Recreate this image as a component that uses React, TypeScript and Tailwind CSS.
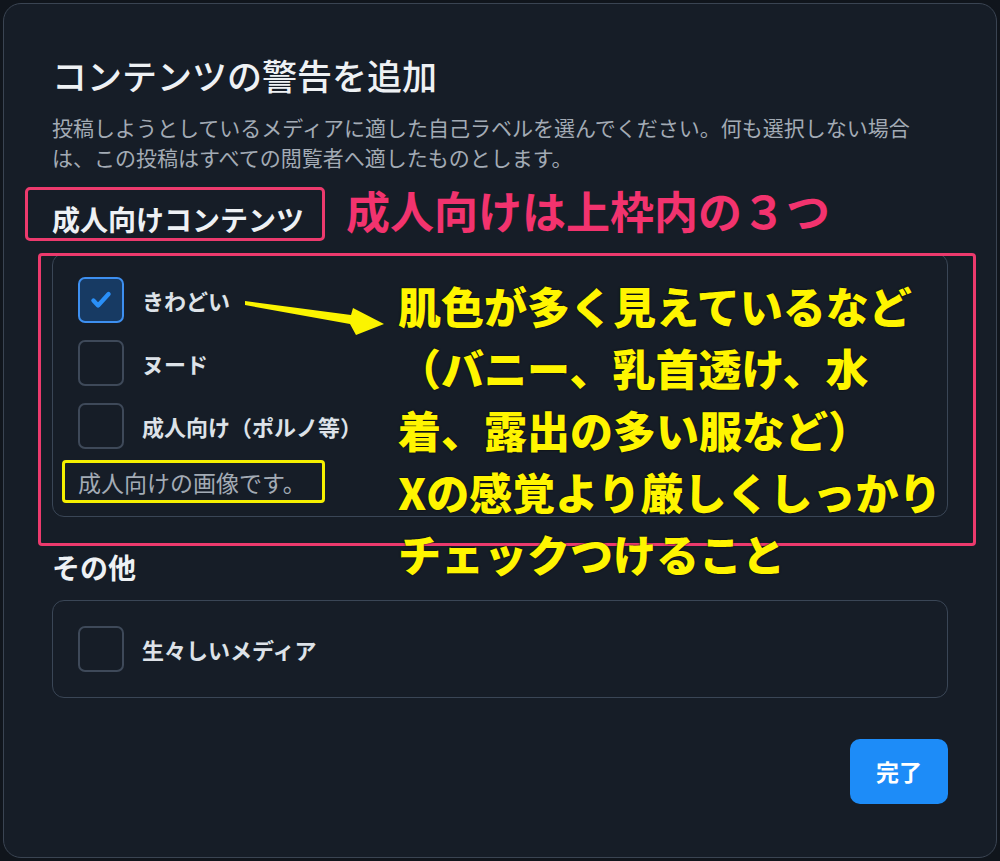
import React from "react";

const font = { fontFamily: '"Noto Sans CJK JP", "Noto Sans", sans-serif' };

function Box({ checked, label }: { checked?: boolean; label: string }) {
  return (
    <div className="flex items-center gap-[18px]">
      {checked ? (
        <div className="flex h-[46px] w-[46px] items-center justify-center rounded-[7px] border-2 border-[#3d8ff0] bg-[#173a63]">
          <svg width="26" height="26" viewBox="0 0 24 24" fill="none">
            <path d="M5 12.5l4.3 4.5L19 6.5" stroke="#2a8ff7" strokeWidth="4" strokeLinecap="round" strokeLinejoin="round" />
          </svg>
        </div>
      ) : (
        <div className="h-[46px] w-[46px] rounded-[7px] border-2 border-[#3e4959]" />
      )}
      <span className="text-[22px] font-semibold leading-[30px] text-[#dde2e8]">{label}</span>
    </div>
  );
}

export default function App() {
  return (
    <div className="relative h-[861px] w-[1000px] overflow-hidden bg-[#10151c]" style={font}>
      <div className="m-[3px] flex h-[855px] flex-col rounded-[18px] border border-[#3a4452] bg-[#161d27] px-[48px] pt-[51px]">
        <h1 className="text-[35px] font-medium leading-[40px] text-[#eef1f4]">コンテンツの警告を追加</h1>
        <p className="mt-[17px] text-[21px] leading-[30px] text-[#a3abb5]">
          投稿しようとしているメディアに適した自己ラベルを選んでください。何も選択しない場合は、この投稿はすべての閲覧者へ適したものとします。
        </p>
        <h2 className="mt-[29px] text-[28px] font-bold leading-[36px] text-[#eef1f4]">成人向けコンテンツ</h2>
        <div className="mt-[16px] flex flex-col rounded-[12px] border border-[#3a4656] px-[25px] pt-[23px] pb-[19px]">
          <div className="flex flex-col gap-[17px]">
            <Box checked label="きわどい" />
            <Box label="ヌード" />
            <Box label="成人向け（ポルノ等）" />
          </div>
          <p className="mt-[18px] text-[23px] leading-[30px] text-[#a3abb5]">成人向けの画像です。</p>
        </div>
        <h2 className="mt-[32px] text-[28px] font-bold leading-[36px] text-[#eef1f4]">その他</h2>
        <div className="mt-[15px] rounded-[12px] border border-[#3a4656] px-[25px] py-[25px]">
          <Box label="生々しいメディア" />
        </div>
        <div className="mt-[41px] flex justify-end">
          <button className="h-[65px] w-[98px] rounded-[10px] bg-[#1d8cf8] text-[23px] font-bold text-white">完了</button>
        </div>
      </div>

      {/* annotations */}
      <div className="absolute left-[25px] top-[187px] h-[54px] w-[300px] rounded-[5px] border-[3px] border-[#ec3a6d]" />
      <div className="absolute left-[346px] top-[186px] text-[44px] font-bold leading-[48px] text-[#f2336e]">成人向けは上枠内の３つ</div>
      <div className="absolute left-[38px] top-[253px] h-[293px] w-[938px] rounded-[4px] border-[3px] border-[#ec3a6d]" />
      <div className="absolute left-[62px] top-[460px] h-[43px] w-[263px] rounded-[4px] border-[3px] border-[#f5f000]" />
      <svg className="absolute left-0 top-0" width="1000" height="861" viewBox="0 0 1000 861">
        <polygon points="245,301 351,315 353,308 384,324 356,335 350,324 245,305" fill="#fbf400" />
      </svg>
      <div className="absolute left-[398px] top-[274px] text-[43px] font-black leading-[62px] text-[#fff500] [text-shadow:0_0_2px_#000]">
        <div>肌色が多く見えているなど</div>
        <div>（バニー、乳首透け、水</div>
        <div>着、露出の多い服など）</div>
        <div>Xの感覚より厳しくしっかり</div>
        <div>チェックつけること</div>
      </div>
    </div>
  );
}
